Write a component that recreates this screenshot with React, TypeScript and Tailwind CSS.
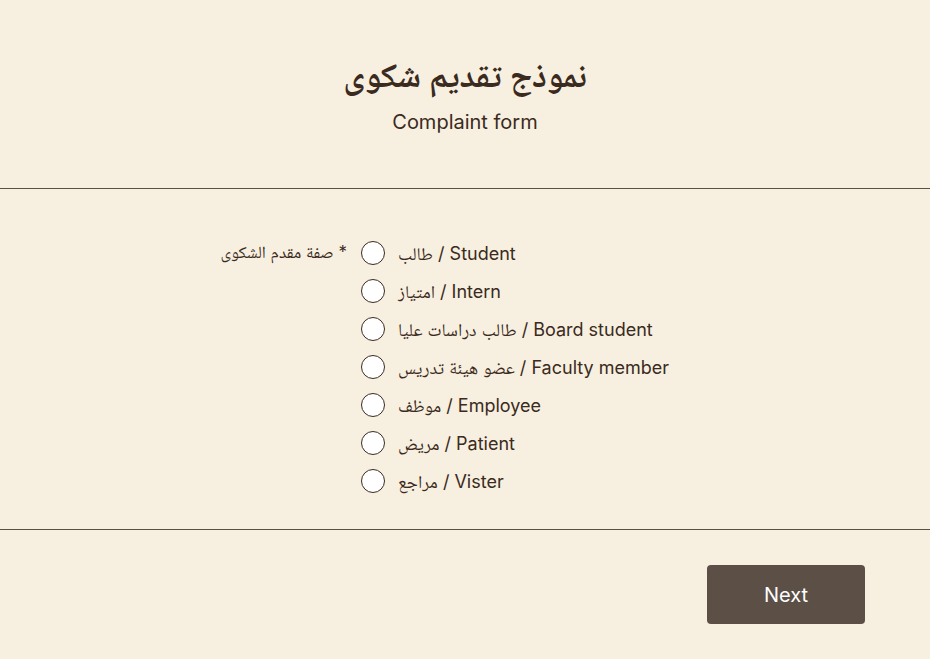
import React from "react";

const options = [
  "طالب / Student",
  "امتياز / Intern",
  "طالب دراسات عليا / Board student",
  "عضو هيئة تدريس / Faculty member",
  "موظف / Employee",
  "مريض / Patient",
  "مراجع / Vister",
];

export default function App() {
  return (
    <div className="w-[930px] h-[659px] bg-[#f7f0e1] text-[#3b2a20] overflow-hidden font-['Inter','Noto_Naskh_Arabic',sans-serif]">
      <header className="h-[188px] flex flex-col items-center pt-[52px]">
        <h1 className="text-[34px] font-bold leading-[46px]">نموذج تقديم شكوى</h1>
        <p className="text-[20px] leading-[28px] mt-[10px]">Complaint form</p>
      </header>
      <div className="h-px bg-[#5c4f46]" />
      <section className="h-[340px] pt-[45px] flex">
        <div className="w-[347px] text-right text-[17px] leading-[36px]">
          صفة مقدم الشكوى <span>*</span>
        </div>
        <div className="ml-[14px] flex flex-col">
          {options.map((o) => (
            <label key={o} className="h-[38px] flex items-center gap-[13px] text-[18px]">
              <span className="w-[24px] h-[24px] rounded-full border border-[#3b2a20] bg-white" />
              <span>{o}</span>
            </label>
          ))}
        </div>
      </section>
      <div className="h-px bg-[#5c4f46]" />
      <footer className="flex justify-end pt-[35px] pr-[65px]">
        <button className="w-[158px] h-[59px] rounded-[4px] bg-[#5c4f46] text-white text-[20px]">
          Next
        </button>
      </footer>
    </div>
  );
}
